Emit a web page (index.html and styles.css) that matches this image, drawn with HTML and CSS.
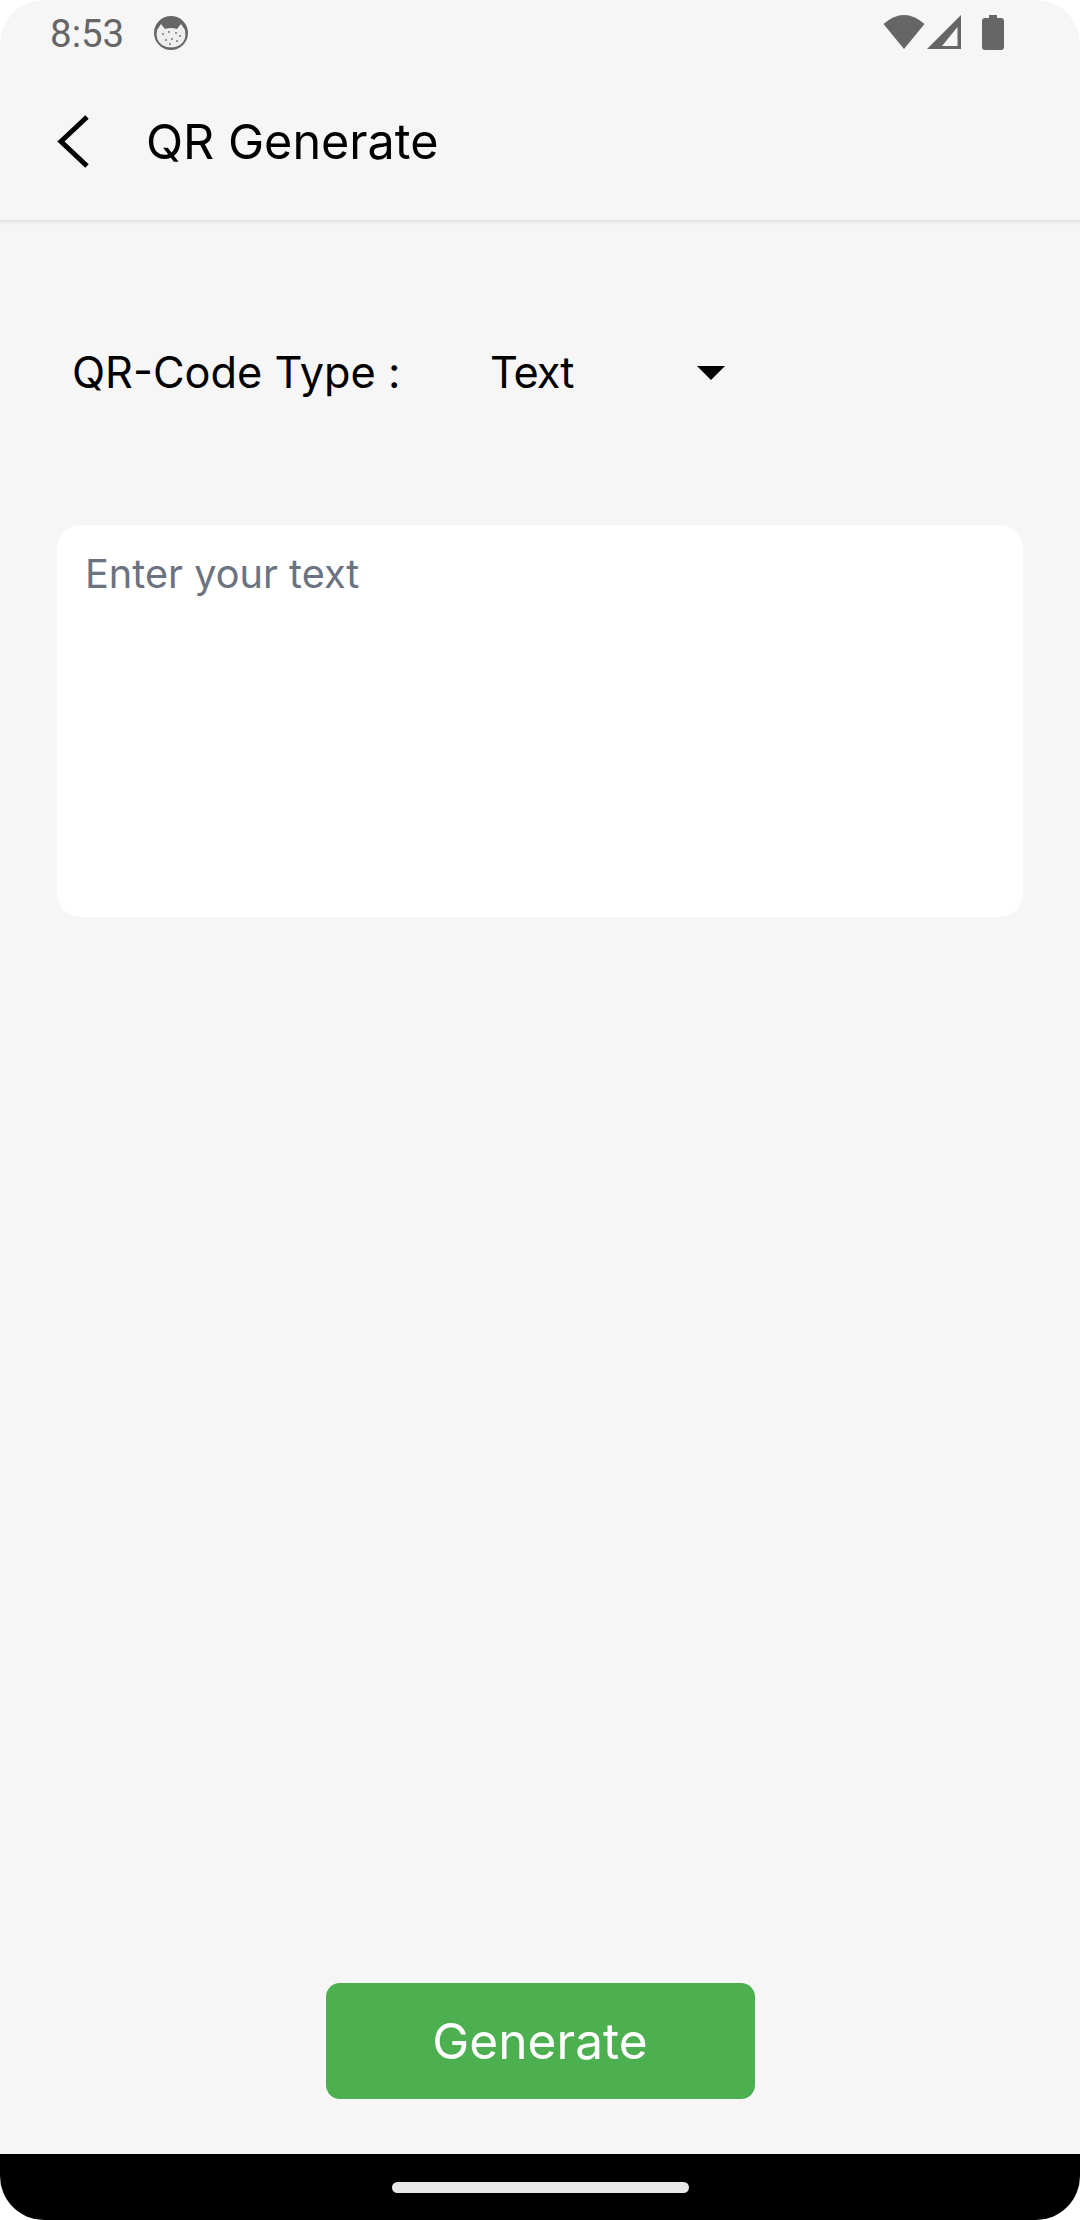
FILE: index.html
```html
<!DOCTYPE html>
<html lang="en">
<head>
    <meta charset="UTF-8">
    <meta name="viewport" content="width=device-width, initial-scale=1.0">
    <title>QR Generate</title>
    <link rel="stylesheet" href="styles.css">
</head>
<body>
    <div class="phone">
        <!-- Status bar -->
        <div class="status-bar">
            <span class="clock">8:53</span>
            <svg class="cat-icon" width="36" height="36" viewBox="0 0 36 36">
                <circle cx="18" cy="18" r="17" fill="#666"/>
                <path d="M4 15 L8 9 L12 14 Q18 12 24 14 L28 9 L32 15 Q34 25 27 30 Q18 35 9 30 Q2 25 4 15 Z" fill="#eee"/>
                <g fill="#777">
                    <circle cx="10" cy="19" r="1"/>
                    <circle cx="16" cy="17" r="1"/>
                    <circle cx="23" cy="18" r="1"/>
                    <circle cx="27" cy="21" r="1"/>
                    <circle cx="13" cy="25" r="1"/>
                    <circle cx="19" cy="24" r="1"/>
                    <circle cx="24" cy="26" r="1"/>
                    <circle cx="17" cy="29" r="1"/>
                </g>
            </svg>
            <span class="spacer"></span>
            <svg class="wifi-icon" width="42" height="36" viewBox="0 0 42 36">
                <path d="M0.500 9 Q21 -9 41.500 9 L21 34 Z" fill="#666"/>
            </svg>
            <svg class="signal-icon" width="35" height="36" viewBox="0 0 35 36">
                <path fill-rule="evenodd" d="M34 0 V34 H0 Z M30.500 12 L15 31 H30.500 Z" fill="#666"/>
            </svg>
            <svg class="battery-icon" width="22" height="36" viewBox="0 0 22 36">
                <path d="M7 0 H15 V3 H19 Q22 3 22 6 V32 Q22 35 19 35 H3 Q0 35 0 32 V6 Q0 3 3 3 H7 Z" fill="#666"/>
            </svg>
        </div>

        <!-- Toolbar -->
        <div class="toolbar">
            <svg class="back-icon" width="34" height="56" viewBox="0 0 34 56">
                <path d="M31 3 L5 27.500 L31 52" fill="none" stroke="#000" stroke-width="5"/>
            </svg>
            <h1 class="title">QR Generate</h1>
        </div>

        <!-- Form -->
        <div class="content">
            <div class="type-row">
                <span class="type-label">QR-Code Type :</span>
                <span class="type-value">Text</span>
                <span class="caret"></span>
            </div>
            <div class="text-card">
                <span class="placeholder">Enter your text</span>
            </div>
            <div class="spacer"></div>
            <button class="generate-btn">Generate</button>
        </div>

        <!-- Navigation bar -->
        <div class="nav-bar">
            <span class="home-pill"></span>
        </div>
    </div>
</body>
</html>
```

FILE: styles.css
```css
* {
    box-sizing: border-box;
}
body {
    margin: 0;
    padding: 0;
    background-color: #fff;
    font-family: Inter, Roboto, sans-serif;
}
.phone {
    display: flex;
    flex-direction: column;
    width: 1080px;
    height: 2220px;
    border-radius: 44px;
    overflow: hidden;
    background-color: #f6f6f6;
}
.spacer {
    flex: 1;
}
.status-bar {
    display: flex;
    align-items: center;
    height: 66px;
    padding: 0 76px 0 50px;
    flex-shrink: 0;
}
.clock {
    font-family: Roboto, sans-serif;
    font-size: 38.5px;
    color: #666;
}
.cat-icon {
    margin-left: 29px;
}
.wifi-icon {
    margin-right: 2px;
}
.signal-icon {
    margin-right: 20px;
}
.toolbar {
    display: flex;
    align-items: center;
    height: 155px;
    padding: 0 0 2px 56px;
    border-bottom: 1px solid #e2e2e2;
    box-shadow: 0 2px 3px rgba(0, 0, 0, 0.06);
    flex-shrink: 0;
}
.back-icon {
    margin-bottom: 1px;
}
.title {
    margin: 0 0 2px 56px;
    font-size: 48.5px;
    font-weight: 400;
    color: #000;
}
.content {
    display: flex;
    flex-direction: column;
    flex: 1;
    padding: 0 57px 55px 57px;
}
.type-row {
    display: flex;
    align-items: center;
    height: 60px;
    margin-top: 122px;
    padding-left: 15px;
    font-size: 43.3px;
    color: #000;
}
.type-label {
    width: 418px;
    padding-bottom: 2px;
}
.type-value {
    width: 207px;
    padding-bottom: 2px;
    letter-spacing: -1px;
}
.caret {
    width: 0;
    height: 0;
    border-left: 14px solid transparent;
    border-right: 14px solid transparent;
    border-top: 14px solid #000;
}
.text-card {
    height: 392px;
    margin-top: 122px;
    padding: 25px 28px;
    border-radius: 24px;
    background-color: #fff;
}
.placeholder {
    font-size: 39.7px;
    color: #6b7280;
}
.generate-btn {
    align-self: center;
    width: 429px;
    height: 116px;
    border: none;
    border-radius: 14px;
    background-color: #4caf50;
    color: #fff;
    font-family: inherit;
    font-size: 49.6px;
}
.nav-bar {
    display: flex;
    align-items: center;
    justify-content: center;
    height: 66px;
    background-color: #000;
    flex-shrink: 0;
}
.home-pill {
    width: 297px;
    height: 11px;
    border-radius: 6px;
    background-color: #e8e8e8;
}
```
